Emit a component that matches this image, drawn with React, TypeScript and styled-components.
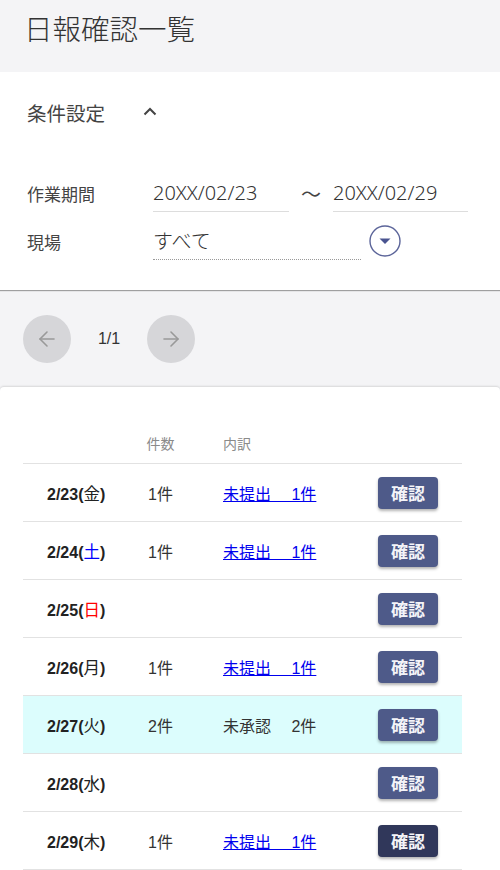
import React from 'react'
import styled, { createGlobalStyle, css } from 'styled-components'
import { ArrowLeft, ArrowRight } from 'lucide-react'

const GlobalStyle = createGlobalStyle`
  body {
    margin: 0;
    background: #f4f4f6;
    font-family: "Noto Sans", "Noto Sans CJK JP", sans-serif;
    color: #333;
  }
`

const Page = styled.div`
  width: 500px;
  min-height: 870px;
  background: #f4f4f6;
`

const Header = styled.header`
  height: 72px;
  display: flex;
  align-items: center;
  padding-left: 24px;
  padding-bottom: 17px;
  box-sizing: border-box;
`

const Title = styled.h1`
  margin: 0;
  font-size: 28.5px;
  font-weight: 300;
  color: #333;
  font-family: "Noto Sans CJK JP", sans-serif;
`

const Panel = styled.section`
  background: #fff;
  padding: 18px 27px 30px;
  box-shadow: 0 1px 1px rgba(0, 0, 0, 0.35);
  position: relative;
`

const Toggle = styled.div`
  height: 44px;
  display: flex;
  align-items: center;
  gap: 36px;
  margin-bottom: 40px;
`

const ToggleLabel = styled.span`
  font-size: 19.5px;
  color: #444;
  font-family: "Noto Sans CJK JP", sans-serif;
`

const FormRow = styled.div`
  display: flex;
  align-items: stretch;
  & + & {
    margin-top: 10px;
  }
`

const Label = styled.div`
  width: 126px;
  display: flex;
  align-items: center;
  font-size: 17px;
  color: #444;
  font-family: "Noto Sans CJK JP", sans-serif;
`

const Field = styled.div<{ $width: number; $dotted?: boolean }>`
  width: ${(p) => p.$width}px;
  height: 38px;
  box-sizing: border-box;
  display: flex;
  align-items: center;
  font-size: 20px;
  font-weight: 300;
  color: #333;
  font-family: "Noto Sans", "Noto Sans CJK JP", sans-serif;
  ${(p) =>
    p.$dotted
      ? css`
          border-bottom: 1px dotted #999;
        `
      : css`
          border-bottom: 1px solid #ddd;
        `}
`

const Tilde = styled.div`
  width: 44px;
  display: flex;
  align-items: center;
  justify-content: center;
  font-size: 20px;
  color: #444;
  font-family: "Noto Sans CJK JP", sans-serif;
`

const SelectButton = styled.div`
  width: 48px;
  display: flex;
  align-items: center;
  justify-content: center;
`

const Pager = styled.nav`
  height: 97px;
  display: flex;
  align-items: center;
  padding-left: 23px;
`

const PageButton = styled.div`
  width: 48px;
  height: 48px;
  border-radius: 50%;
  background: #d6d6d9;
  color: #999;
  display: flex;
  align-items: center;
  justify-content: center;
`

const PageCount = styled.span`
  width: 76px;
  text-align: center;
  font-size: 16px;
  color: #333;
  font-family: "Liberation Sans", sans-serif;
`

const Card = styled.main`
  background: #fff;
  border-radius: 4px 4px 0 0;
  box-shadow: 0 -1px 2px rgba(0, 0, 0, 0.12);
  padding: 36px 38px 0 23px;
  min-height: 483px;
  box-sizing: border-box;
`

const Row = styled.div<{ $head?: boolean; $highlight?: boolean }>`
  display: grid;
  grid-template-columns: 99px 77px 1fr 107px;
  align-items: center;
  height: ${(p) => (p.$head ? 40 : 57)}px;
  border-bottom: 1px solid #e2e2e2;
  background: ${(p) => (p.$highlight ? '#dcfdfd' : 'transparent')};
  font-family: "Liberation Sans", "Noto Sans CJK JP", sans-serif;
`

const HeadCell = styled.div<{ $center?: boolean }>`
  font-size: 14px;
  color: #8a8a8a;
  text-align: ${(p) => (p.$center ? 'center' : 'left')};
  padding-left: ${(p) => (p.$center ? 0 : 24)}px;
`

const DateCell = styled.div`
  padding-left: 24px;
  font-size: 16px;
  font-weight: bold;
  color: #222;
  white-space: nowrap;
`

const Day = styled.span<{ $color: string }>`
  color: ${(p) => p.$color};
  font-weight: normal;
  font-family: "Noto Sans CJK JP", sans-serif;
  font-size: 16.5px;
`

const CountCell = styled.div`
  text-align: center;
  font-size: 16px;
  color: #333;
`

const DetailCell = styled.div`
  padding-left: 24px;
  font-size: 16px;
  color: #333;
  white-space: pre;
`

const DetailLink = styled.a`
  color: #0000ee;
  text-decoration: underline;
  cursor: pointer;
`

const ActionCell = styled.div`
  padding-left: 23px;
  display: flex;
  align-items: center;
`

const ConfirmButton = styled.button<{ $active?: boolean }>`
  width: 60px;
  height: 32px;
  border: none;
  border-radius: 4px;
  background: ${(p) => (p.$active ? '#30375a' : '#4e5a89')};
  color: #f4f4f8;
  font-size: 17px;
  font-weight: bold;
  font-family: "Noto Sans CJK JP", sans-serif;
  box-shadow: 0 2px 3px rgba(0, 0, 0, 0.3);
  padding: 0;
  cursor: pointer;
`

interface Report {
  date: string
  day: string
  dayColor: string
  count?: string
  detail?: string
  linked?: boolean
  highlight?: boolean
  active?: boolean
}

const reports: Report[] = [
  { date: '2/23', day: '金', dayColor: '#222', count: '1件', detail: '未提出\u3000 1件', linked: true },
  { date: '2/24', day: '土', dayColor: '#0000ff', count: '1件', detail: '未提出\u3000 1件', linked: true },
  { date: '2/25', day: '日', dayColor: '#ff0000' },
  { date: '2/26', day: '月', dayColor: '#222', count: '1件', detail: '未提出\u3000 1件', linked: true },
  { date: '2/27', day: '火', dayColor: '#222', count: '2件', detail: '未承認\u3000 2件', highlight: true },
  { date: '2/28', day: '水', dayColor: '#222' },
  { date: '2/29', day: '木', dayColor: '#222', count: '1件', detail: '未提出\u3000 1件', linked: true, active: true },
]

const ChevronUpIcon = () => (
  <svg width='18' height='18' viewBox='0 0 18 18'>
    <path d='M3.5 11.5 L9 6 L14.5 11.5' fill='none' stroke='#444' strokeWidth='2' />
  </svg>
)

const DropdownIcon = () => (
  <svg width='32' height='32' viewBox='0 0 32 32'>
    <circle cx='16' cy='16' r='15' fill='none' stroke='#5b6499' strokeWidth='1.4' />
    <path d='M10.5 13.5 H21.5 L16 19 Z' fill='#4a5490' />
  </svg>
)

const App = () => {
  return (
    <Page>
      <GlobalStyle />
      <Header>
        <Title>日報確認一覧</Title>
      </Header>
      <Panel>
        <Toggle>
          <ToggleLabel>条件設定</ToggleLabel>
          <ChevronUpIcon />
        </Toggle>
        <FormRow>
          <Label>作業期間</Label>
          <Field $width={136}>20XX/02/23</Field>
          <Tilde>～</Tilde>
          <Field $width={135}>20XX/02/29</Field>
        </FormRow>
        <FormRow>
          <Label>現場</Label>
          <Field $width={208} $dotted>
            すべて
          </Field>
          <SelectButton>
            <DropdownIcon />
          </SelectButton>
        </FormRow>
      </Panel>
      <Pager>
        <PageButton>
          <ArrowLeft size={24} strokeWidth={1.6} />
        </PageButton>
        <PageCount>1/1</PageCount>
        <PageButton>
          <ArrowRight size={24} strokeWidth={1.6} />
        </PageButton>
      </Pager>
      <Card>
        <Row $head>
          <div />
          <HeadCell $center>件数</HeadCell>
          <HeadCell>内訳</HeadCell>
          <div />
        </Row>
        {reports.map((r) => (
          <Row key={r.date} $highlight={r.highlight}>
            <DateCell>
              {r.date}(<Day $color={r.dayColor}>{r.day}</Day>)
            </DateCell>
            <CountCell>{r.count}</CountCell>
            <DetailCell>
              {r.detail && (r.linked ? <DetailLink>{r.detail}</DetailLink> : r.detail)}
            </DetailCell>
            <ActionCell>
              <ConfirmButton $active={r.active}>確認</ConfirmButton>
            </ActionCell>
          </Row>
        ))}
      </Card>
    </Page>
  )
}

export default App
